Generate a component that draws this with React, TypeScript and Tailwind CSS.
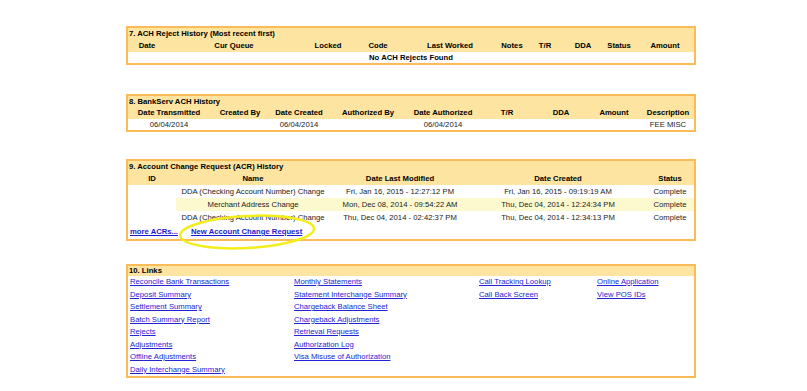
import React from 'react';

const font = "font-['Liberation_Sans',Arial,sans-serif]";

const BoxTitle = ({ children, h = 'h-[11px] leading-[11px]' }: { children: React.ReactNode; h?: string }) => (
  <div className={`${h} bg-[#fde4a0] font-bold pl-[1px] whitespace-nowrap`}>{children}</div>
);

const AchReject = () => {
  const cols = ['Date', 'Cur Queue', 'Locked', 'Code', 'Last Worked', 'Notes', 'T/R', 'DDA', 'Status', 'Amount'];
  return (
    <div className="w-[570px] border-2 border-[#fbbb58]">
      <BoxTitle>7. ACH Reject History (Most recent first)</BoxTitle>
      <div className="grid grid-cols-[38px_136px_52px_48px_96px_28px_38px_38px_34px_1fr] h-[13px] bg-[#fde4a0] font-bold leading-[13px] text-center">
        {cols.map((c) => (
          <div key={c} className="whitespace-nowrap">{c}</div>
        ))}
      </div>
      <div className="h-[11px] leading-[11px] text-center font-bold">No ACH Rejects Found</div>
    </div>
  );
};

const BankServ = () => {
  const cols = ['Date Transmitted', 'Created By', 'Date Created', 'Authorized By', 'Date Authorized', 'T/R', 'DDA', 'Amount', 'Description'];
  const row = ['06/04/2014', '', '06/04/2014', '', '06/04/2014', '', '', '', 'FEE MISC'];
  const grid = 'grid grid-cols-[82px_60px_58px_80px_70px_58px_50px_56px_1fr] text-center';
  return (
    <div className="w-[570px] border-2 border-[#fbbb58]">
      <BoxTitle>8. BankServ ACH History</BoxTitle>
      <div className={`${grid} h-[12px] bg-[#fde4a0] font-bold leading-[12px]`}>
        {cols.map((c) => (
          <div key={c} className="whitespace-nowrap">{c}</div>
        ))}
      </div>
      <div className={`${grid} h-[11px] leading-[11px] text-[#222]`}>
        {row.map((c, i) => (
          <div key={i} className="whitespace-nowrap">{c}</div>
        ))}
      </div>
    </div>
  );
};

const AcrHistory = () => {
  const rows = [
    { name: 'DDA (Checking Account Number) Change', mod: 'Fri, Jan 16, 2015 - 12:27:12 PM', created: 'Fri, Jan 16, 2015 - 09:19:19 AM', hl: false },
    { name: 'Merchant Address Change', mod: 'Mon, Dec 08, 2014 - 09:54:22 AM', created: 'Thu, Dec 04, 2014 - 12:24:34 PM', hl: true },
    { name: 'DDA (Checking Account Number) Change', mod: 'Thu, Dec 04, 2014 - 02:42:37 PM', created: 'Thu, Dec 04, 2014 - 12:34:13 PM', hl: false },
  ];
  const grid = 'grid grid-cols-[48px_154px_140px_176px_1fr] text-center';
  return (
    <div className="relative w-[570px]">
      <div className="border-2 border-[#fbbb58]">
        <BoxTitle>9. Account Change Request (ACR) History</BoxTitle>
        <div className={`${grid} h-[13px] bg-[#fde4a0] font-bold leading-[13px]`}>
          <div>ID</div>
          <div>Name</div>
          <div>Date Last Modified</div>
          <div>Date Created</div>
          <div>Status</div>
        </div>
        {rows.map((r, i) => (
          <div key={i} className={`${grid} h-[13px] leading-[13px] text-[#222]`}>
            <div />
            <div className={`whitespace-nowrap ${r.hl ? 'bg-[#fdf9cf]' : ''}`}>{r.name}</div>
            <div className={`whitespace-nowrap ${r.hl ? 'bg-[#fdf9cf]' : ''}`}>{r.mod}</div>
            <div className={`whitespace-nowrap ${r.hl ? 'bg-[#fdf9cf]' : ''}`}>{r.created}</div>
            <div className={`whitespace-nowrap ${r.hl ? 'bg-[#fdf9cf]' : ''}`}>Complete</div>
          </div>
        ))}
        <div className="flex h-[15px] items-center gap-[13px] pl-[2px] font-bold text-[#1a1ad0]">
          <a href="#" className="underline">more ACRs...</a>
          <a href="#" className="underline">New Account Change Request</a>
        </div>
      </div>
      <svg className="absolute left-[51px] top-[54px]" width="142" height="40" viewBox="0 0 142 40">
        <ellipse cx="70" cy="19" rx="67" ry="16" fill="none" stroke="#f3ed1c" strokeWidth="2.5" transform="rotate(-3 70 19)" />
      </svg>
    </div>
  );
};

const Links = () => {
  const columns = [
    ['Reconcile Bank Transactions', 'Deposit Summary', 'Settlement Summary', 'Batch Summary Report', 'Rejects', 'Adjustments', 'Offline Adjustments', 'Daily Interchange Summary'],
    ['Monthly Statements', 'Statement Interchange Summary', 'Chargeback Balance Sheet', 'Chargeback Adjustments', 'Retrieval Requests', 'Authorization Log', 'Visa Misuse of Authorization'],
    ['Call Tracking Lookup', 'Call Back Screen'],
    ['Online Application', 'View POS IDs'],
  ];
  return (
    <div className="w-[570px] border-2 border-[#fbbb58]">
      <BoxTitle h="h-[10px] leading-[10px]">10. Links</BoxTitle>
      <div className="grid grid-cols-[164px_185px_118px_1fr] pl-[2px]">
        {columns.map((col, i) => (
          <div key={i} className="flex flex-col">
            {col.map((l) => (
              <a key={l} href="#" className="h-[12.5px] leading-[12.5px] whitespace-nowrap text-[#2323d6] underline">
                {l}
              </a>
            ))}
          </div>
        ))}
      </div>
    </div>
  );
}

export default function App() {
  return (
    <div className={`min-h-[391px] w-[807px] bg-white pt-[26px] pl-[126px] text-[7.7px] text-black ${font}`}>
      <div className="flex flex-col">
        <AchReject />
        <div className="h-[29px]" />
        <BankServ />
        <div className="h-[27px]" />
        <AcrHistory />
        <div className="h-[23px]" />
        <Links />
      </div>
    </div>
  );
}
